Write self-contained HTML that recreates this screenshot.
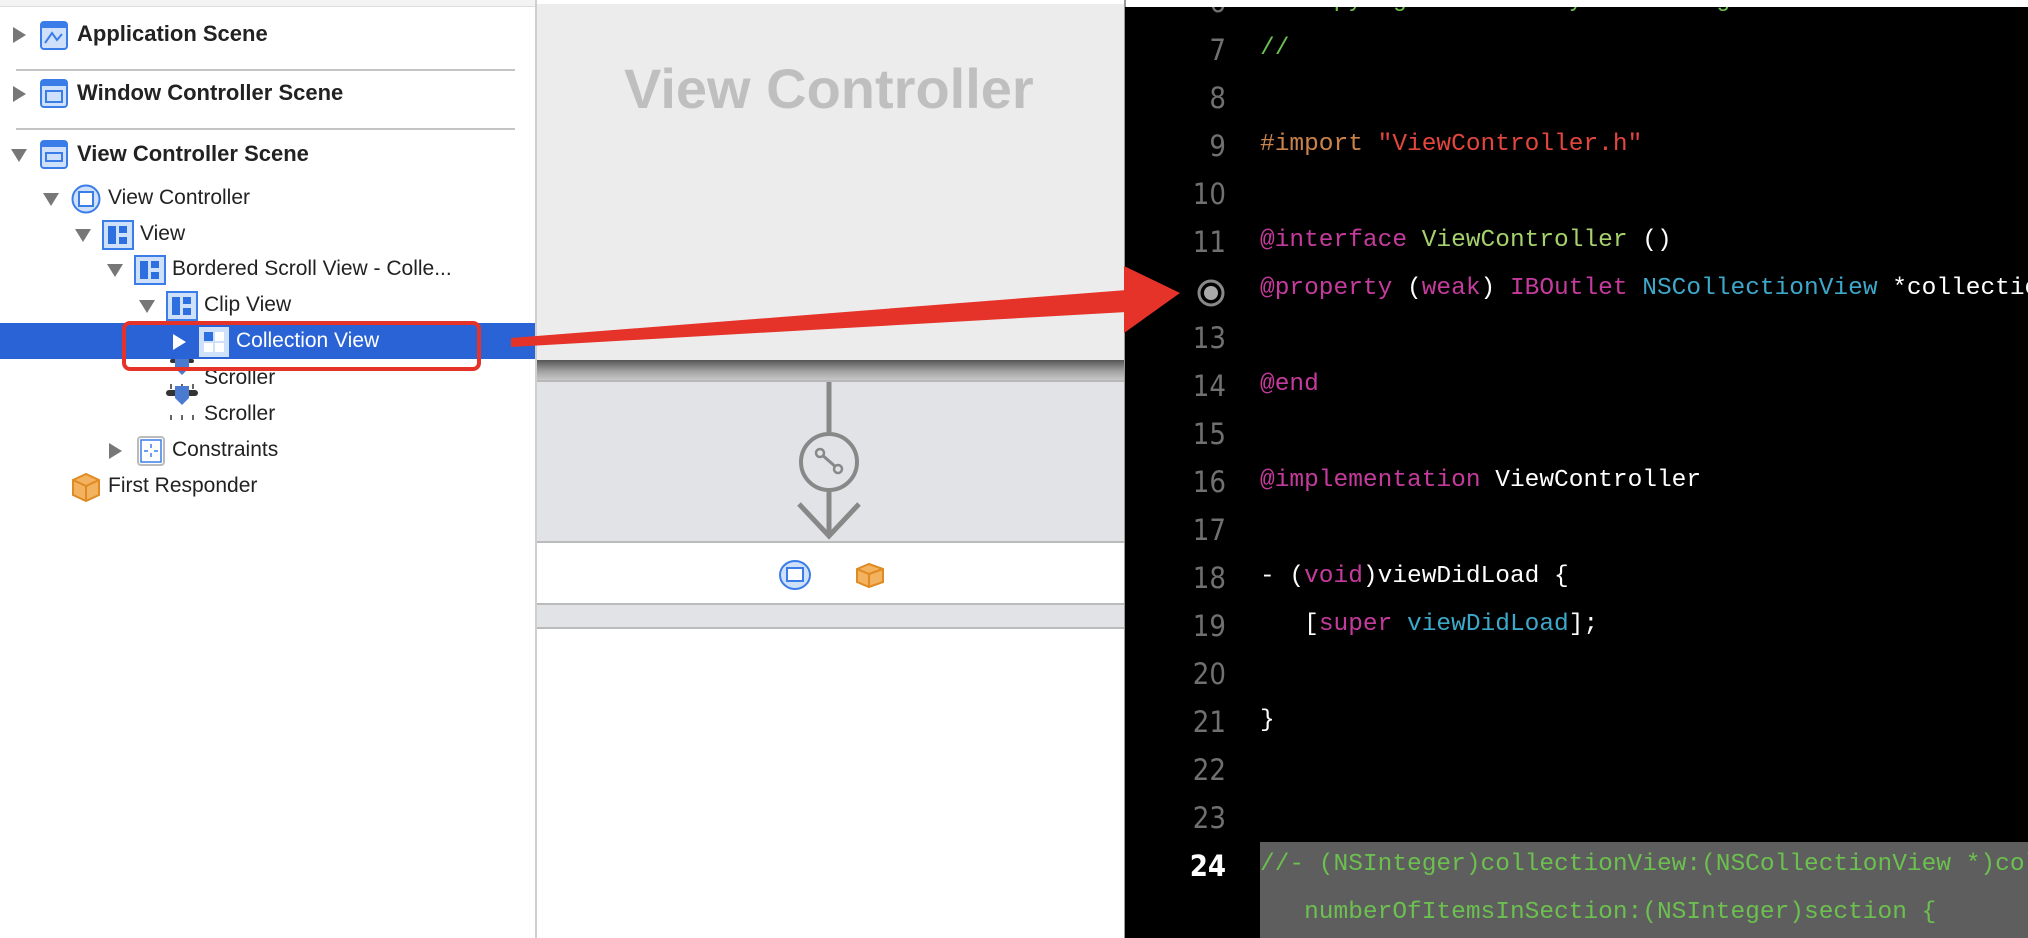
<!DOCTYPE html>
<html><head><meta charset="utf-8"><style>
*{margin:0;padding:0;box-sizing:border-box}
body{width:2028px;height:938px;overflow:hidden;background:#fff;position:relative;font-family:"Liberation Sans",Arial,sans-serif}
.abs{position:absolute}
.tri{position:absolute;width:0;height:0}
.tr{border-top:8px solid transparent;border-bottom:8px solid transparent;border-left:13px solid #777}
.td{border-left:8px solid transparent;border-right:8px solid transparent;border-top:13px solid #777}
.code{position:absolute;left:1125px;top:7px;width:903px;height:931px;background:#000;overflow:hidden}
.ln{position:absolute;left:0;width:101px;text-align:right;font-size:29px;color:#707070;font-family:"DejaVu Sans Condensed","DejaVu Sans",sans-serif}
.cl{position:absolute;left:135px;font-family:"Liberation Mono",monospace;font-size:24.5px;color:#fff;white-space:pre}
.g{color:#6cc04f}.m{color:#c53b9d}.o{color:#c9834b}.r{color:#e2463d}.lg{color:#a6d16c}.c{color:#3da8c9}
</style></head><body>
<div class="abs" style="left:0;top:0;width:535px;height:7px;background:#f3f3f3;border-bottom:1px solid #ddd"></div>
<div class="abs" style="left:535px;top:0;width:2px;height:938px;background:#cfcfcf"></div>
<div class="abs" style="left:16px;top:69px;width:499px;height:2px;background:#c4c4c4"></div>
<div class="abs" style="left:16px;top:128px;width:499px;height:2px;background:#c4c4c4"></div>
<div class="abs" style="left:0;top:323px;width:535px;height:36px;background:#2a63d6"></div>

<div class="tri tr" style="left:13px;top:27px"></div>
<svg class="abs" style="left:40px;top:21px" width="28" height="29" viewBox="0 0 28 29"><rect x="1" y="1" width="26" height="27" rx="3" fill="#cfe0fb" stroke="#3b7de8" stroke-width="2"/><rect x="1" y="1" width="26" height="6" fill="#3b7de8"/><path d="M5 22l7-10 5 7 5-6" stroke="#3b7de8" stroke-width="2" fill="none"/></svg>
<div class="abs" style="left:77px;top:21px;font-size:22px;font-weight:bold;color:#222">Application Scene</div>

<div class="tri tr" style="left:13px;top:86px"></div>
<svg class="abs" style="left:40px;top:79px" width="28" height="29" viewBox="0 0 28 29"><rect x="1" y="1" width="26" height="27" rx="3" fill="#cfe0fb" stroke="#3b7de8" stroke-width="2"/><rect x="1" y="1" width="26" height="6" fill="#3b7de8"/><rect x="6" y="12" width="16" height="11" fill="none" stroke="#3b7de8" stroke-width="2"/></svg>
<div class="abs" style="left:77px;top:80px;font-size:22px;font-weight:bold;color:#222">Window Controller Scene</div>

<div class="tri td" style="left:11px;top:149px"></div>
<svg class="abs" style="left:40px;top:140px" width="28" height="29" viewBox="0 0 28 29"><rect x="1" y="1" width="26" height="27" rx="3" fill="#cfe0fb" stroke="#3b7de8" stroke-width="2"/><rect x="1" y="1" width="26" height="6" fill="#3b7de8"/><rect x="6" y="13" width="16" height="8" fill="none" stroke="#3b7de8" stroke-width="2"/></svg>
<div class="abs" style="left:77px;top:141px;font-size:22px;font-weight:bold;color:#222">View Controller Scene</div>

<div class="tri td" style="left:43px;top:193px"></div>
<svg class="abs" style="left:71px;top:184px" width="30" height="30"><circle cx="15" cy="15" r="13.5" fill="#cfe0fb" stroke="#3b7de8" stroke-width="2"/><rect x="8" y="8" width="14" height="14" fill="#fff" stroke="#3b7de8" stroke-width="2"/></svg>
<div class="abs" style="left:108px;top:186px;font-size:21px;color:#222">View Controller</div>

<div class="tri td" style="left:75px;top:229px"></div>
<svg class="abs" style="left:102px;top:220px" width="32" height="30"><rect x="1" y="1" width="30" height="28" fill="#cfe0fb" stroke="#3b7de8" stroke-width="2"/><rect x="6" y="6" width="8" height="18" fill="#2e6fe0"/><rect x="17" y="6" width="8" height="7" fill="#2e6fe0"/><rect x="17" y="17" width="8" height="7" fill="#2e6fe0"/></svg>
<div class="abs" style="left:140px;top:222px;font-size:21px;color:#222">View</div>

<div class="tri td" style="left:107px;top:264px"></div>
<svg class="abs" style="left:134px;top:255px" width="32" height="30"><rect x="1" y="1" width="30" height="28" fill="#cfe0fb" stroke="#3b7de8" stroke-width="2"/><rect x="6" y="6" width="8" height="18" fill="#2e6fe0"/><rect x="17" y="6" width="8" height="7" fill="#2e6fe0"/><rect x="17" y="17" width="8" height="7" fill="#2e6fe0"/></svg>
<div class="abs" style="left:172px;top:257px;font-size:21px;color:#222">Bordered Scroll View - Colle...</div>

<div class="tri td" style="left:139px;top:300px"></div>
<svg class="abs" style="left:166px;top:291px" width="32" height="30"><rect x="1" y="1" width="30" height="28" fill="#cfe0fb" stroke="#3b7de8" stroke-width="2"/><rect x="6" y="6" width="8" height="18" fill="#2e6fe0"/><rect x="17" y="6" width="8" height="7" fill="#2e6fe0"/><rect x="17" y="17" width="8" height="7" fill="#2e6fe0"/></svg>
<div class="abs" style="left:204px;top:293px;font-size:21px;color:#222">Clip View</div>

<div class="tri" style="left:173px;top:334px;border-top:8px solid transparent;border-bottom:8px solid transparent;border-left:13px solid #fff"></div>
<svg class="abs" style="left:199px;top:327px" width="30" height="30"><rect x="0" y="0" width="30" height="30" fill="#cfe0fb"/><rect x="5" y="5" width="9" height="9" fill="#2e6fe0"/><rect x="16" y="5" width="9" height="9" fill="#fff"/><rect x="5" y="16" width="9" height="9" fill="#fff"/><rect x="16" y="16" width="9" height="9" fill="#fff"/></svg>
<div class="abs" style="left:236px;top:329px;font-size:21px;color:#fff">Collection View</div>

<svg class="abs" style="left:166px;top:359px" width="32" height="36"><rect x="4" y="0" width="24" height="4" rx="2" fill="#333"/><path d="M9 0h14v9l-7 7-7-7z" fill="#4a7bd0"/><path d="M5 25v5M16 25v5M27 25v5" stroke="#333" stroke-width="1.5"/></svg>
<div class="abs" style="left:204px;top:366px;font-size:21px;color:#222">Scroller</div>
<svg class="abs" style="left:166px;top:384px" width="32" height="40"><rect x="0" y="6" width="32" height="6" rx="3" fill="#333"/><path d="M9 2h14v12l-7 7-7-7z" fill="#4a7bd0"/><path d="M5 31v5M16 31v5M27 31v5" stroke="#333" stroke-width="1.5"/></svg>
<div class="abs" style="left:204px;top:402px;font-size:21px;color:#222">Scroller</div>

<div class="tri tr" style="left:109px;top:443px"></div>
<svg class="abs" style="left:137px;top:436px" width="28" height="30"><rect x="1" y="1" width="26" height="28" rx="3" fill="#fff" stroke="#bbb" stroke-width="2"/><rect x="4" y="4" width="20" height="22" fill="none" stroke="#3b7de8" stroke-width="1.5"/><path d="M14 8v4M14 17v4M7 15h4M17 15h4" stroke="#3b7de8" stroke-width="1.5"/></svg>
<div class="abs" style="left:172px;top:438px;font-size:21px;color:#222">Constraints</div>

<svg class="abs" style="left:71px;top:472px" width="30" height="30"><path d="M2 8l13-6 13 6v15l-13 6-13-6z" fill="#f3b25f" stroke="#e08a22" stroke-width="2"/><path d="M2 8l13 6 13-6M15 14v15" stroke="#e08a22" stroke-width="2" fill="none"/></svg>
<div class="abs" style="left:108px;top:474px;font-size:21px;color:#222">First Responder</div>

<div class="abs" style="left:122px;top:321px;width:359px;height:50px;border:4px solid #e5332a;border-radius:8px"></div>

<div class="abs" style="left:537px;top:4px;width:588px;height:356px;background:#ececec"></div>
<div class="abs" style="left:624px;top:56px;font-size:56px;font-weight:bold;color:#bfbfbf;white-space:nowrap">View Controller</div>
<div class="abs" style="left:537px;top:360px;width:588px;height:22px;background:linear-gradient(#555,#a0a0a0 50%,#d0d0d0)"></div>
<div class="abs" style="left:537px;top:380px;width:588px;height:2px;background:#b8b8b8"></div>
<div class="abs" style="left:537px;top:382px;width:588px;height:161px;background:#e2e3e7;border-bottom:2px solid #bbb"></div>
<div class="abs" style="left:537px;top:543px;width:588px;height:62px;background:#fff;border-bottom:2px solid #bbb"></div>
<div class="abs" style="left:537px;top:605px;width:588px;height:24px;background:#e2e3e7;border-bottom:2px solid #bbb"></div>
<svg class="abs" style="left:537px;top:382px" width="588" height="161">
<g stroke="#888" stroke-width="5" fill="none"><path d="M292 0v50"/><circle cx="292" cy="80" r="28" stroke-width="4"/><path d="M292 108v46"/><path d="M262 122l30 32 30-32" stroke-width="5"/><path d="M284 72l16 14" stroke-width="3"/></g>
<circle cx="283" cy="71" r="4" fill="#e2e3e7" stroke="#888" stroke-width="2.5"/><circle cx="301" cy="87" r="4" fill="#e2e3e7" stroke="#888" stroke-width="2.5"/></svg>
<svg class="abs" style="left:779px;top:559px" width="32" height="32"><ellipse cx="16" cy="16" rx="15" ry="14" fill="#cfe0fb" stroke="#3b7de8" stroke-width="2"/><rect x="8" y="9" width="16" height="13" fill="#fff" stroke="#3b7de8" stroke-width="2"/></svg>
<svg class="abs" style="left:855px;top:562px" width="30" height="27"><path d="M2 7l12-5 14 5v13l-14 5-12-5z" fill="#f3b25f" stroke="#e08a22" stroke-width="2"/><path d="M2 7l12 5 14-5M14 12v13" stroke="#e08a22" stroke-width="2" fill="none"/></svg>
<div class="abs" style="left:1124px;top:0;width:2px;height:938px;background:#999"></div>

<div class="code">
<div class="ln" style="top:-22px">6</div><div class="cl g" style="top:-20px">// Copyright © 2019 ayb. All rights reserved.</div>
<div class="ln" style="top:26px">7</div><div class="cl g" style="top:28px">//</div>
<div class="ln" style="top:74px">8</div>
<div class="ln" style="top:122px">9</div><div class="cl" style="top:124px"><span class="o">#import</span> <span class="r">"ViewController.h"</span></div>
<div class="ln" style="top:170px">10</div>
<div class="ln" style="top:218px">11</div><div class="cl" style="top:220px"><span class="m">@interface</span> <span class="lg">ViewController</span> ()</div>
<svg class="abs" style="left:71px;top:271px" width="30" height="30"><circle cx="15" cy="15" r="12" fill="none" stroke="#888" stroke-width="3"/><circle cx="15" cy="15" r="7" fill="#aaa"/></svg>
<div class="cl" style="top:268px"><span class="m">@property</span> (<span class="m">weak</span>) <span class="m">IBOutlet</span> <span class="c">NSCollectionView</span> *collectionView;</div>
<div class="ln" style="top:314px">13</div>
<div class="ln" style="top:362px">14</div><div class="cl m" style="top:364px">@end</div>
<div class="ln" style="top:410px">15</div>
<div class="ln" style="top:458px">16</div><div class="cl" style="top:460px"><span class="m">@implementation</span> ViewController</div>
<div class="ln" style="top:506px">17</div>
<div class="ln" style="top:554px">18</div><div class="cl" style="top:556px">- (<span class="m">void</span>)viewDidLoad {</div>
<div class="ln" style="top:602px">19</div><div class="cl" style="top:604px">   [<span class="m">super</span> <span class="c">viewDidLoad</span>];</div>
<div class="ln" style="top:650px">20</div>
<div class="ln" style="top:698px">21</div><div class="cl" style="top:700px">}</div>
<div class="ln" style="top:746px">22</div>
<div class="ln" style="top:794px">23</div>
<div class="abs" style="left:135px;top:835px;width:800px;height:100px;background:#5e5e5e"></div>
<div class="ln" style="top:842px;color:#fff;font-weight:bold">24</div>
<div class="cl g" style="top:844px">//- (NSInteger)collectionView:(NSCollectionView *)collectionView</div>
<div class="cl g" style="top:892px">   numberOfItemsInSection:(NSInteger)section {</div>
</div>

<svg class="abs" style="left:0;top:0" width="2028" height="938"><polygon points="511,338 1127,290 1127,312 511,347" fill="#e5332a"/><polygon points="1124,266 1180,293 1124,333" fill="#e5332a"/></svg>
</body></html>
